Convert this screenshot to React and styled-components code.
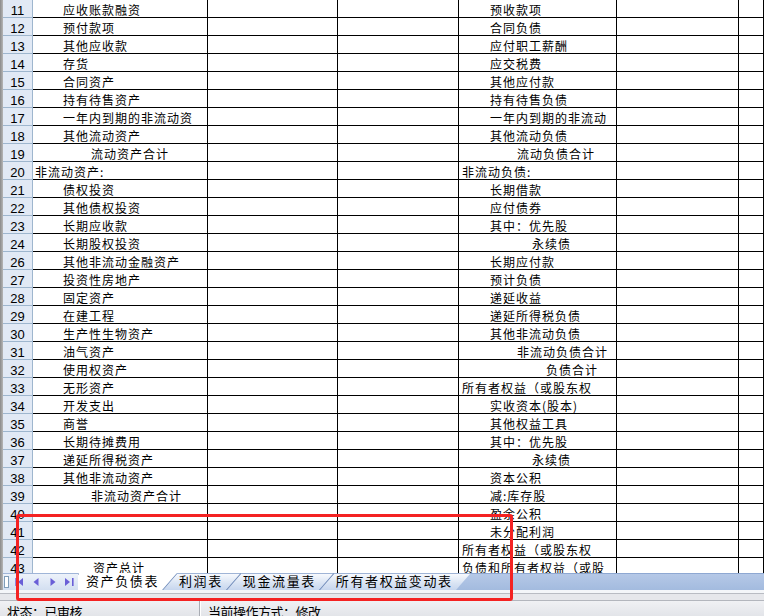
import React from 'react';
import styled, { createGlobalStyle } from 'styled-components';

const Global = createGlobalStyle`
  html, body { margin: 0; padding: 0; background: #fff; }
  body { font-family: "Noto Sans CJK SC", "Noto Sans", sans-serif; }
`;

const Root = styled.div`
  position: relative;
  width: 764px;
  height: 616px;
  overflow: hidden;
  display: flex;
  flex-direction: column;
  background: #fff;
`;

const Body = styled.div`
  display: flex;
  height: 590px;
  flex: none;
`;

const Strip = styled.div`
  width: 3px;
  flex: none;
  background: linear-gradient(to right, #8a8a8a, #b6b6b6);
`;

const Main = styled.div`
  flex: 1;
  min-width: 0;
  display: flex;
  flex-direction: column;
`;

const Grid = styled.div`
  height: 573px;
  overflow: hidden;
  flex: none;
`;

const Row = styled.div`
  display: grid;
  grid-template-columns: 30px 175px 130px 121px 158px 122px 1fr;
  height: 18px;
`;

const RowHead = styled.div`
  box-sizing: border-box;
  background: #e1e9f5;
  border-right: 1px solid #9eb6ce;
  border-bottom: 1px solid #9eb6ce;
  font: 13px "Liberation Sans", Arial, sans-serif;
  color: #000;
  text-align: center;
  line-height: 17px;
  padding-top: 2px;
  overflow: hidden;
`;

const Cell = styled.div`
  box-sizing: border-box;
  border-right: 1px solid #000;
  border-bottom: 1px solid #000;
  padding-left: ${(p) => p.$indent || 0}px;
  padding-top: 1px;
  font-family: "Noto Sans CJK SC", sans-serif;
  font-size: 12px;
  letter-spacing: 1px;
  line-height: 17px;
  color: #000;
  white-space: nowrap;
  overflow: hidden;
`;

const TabBar = styled.div`
  display: flex;
  height: 17px;
  flex: none;
  background: linear-gradient(#8ea8d2 0 1px, #b5c8e7 1px, #a3bbdf);
`;

const Nav = styled.div`
  position: relative;
  z-index: 30;
  width: 75px;
  flex: none;
  display: flex;
  align-items: center;
  padding-left: 1px;
  box-sizing: border-box;
  background: linear-gradient(#9fb5d8 0 1px, #edf2fa 1px, #d3dff1);
`;

const Handle = styled.div`
  width: 3px;
  height: 10px;
  margin-right: 2px;
  background: #fff;
  border: 1px solid #7f9db9;
  box-sizing: content-box;
`;

const NavButton = styled.div`
  width: 17px;
  height: 17px;
  display: flex;
  align-items: center;
  justify-content: center;
`;

const TabList = styled.div`
  display: flex;
  margin-left: -14px;
  height: 17px;
`;

const Tab = styled.div`
  position: relative;
  z-index: ${(p) => (p.$active ? 20 : p.$order)};
  height: 17px;
  padding: 0 3px 0 ${(p) => (p.$first ? 22 : 17)}px;
  font-family: "Noto Sans CJK SC", sans-serif;
  font-size: 13px;
  letter-spacing: 1.6px;
  line-height: 16px;
  color: #000;
  white-space: nowrap;

  &::before {
    content: "";
    position: absolute;
    inset: 0;
    z-index: -1;
    transform-origin: bottom left;
    transform: skewX(-41deg);
    border-left: 1px solid #6f88b5;
    border-top: 1px solid ${(p) => (p.$active ? '#ffffff' : '#9fb4d6')};
    background: ${(p) =>
      p.$active
        ? '#ffffff'
        : 'linear-gradient(#f7f9fd, #d8e3f3 60%, #c7d6ee)'};
  }
`;

const Gap = styled.div`
  height: 10px;
  flex: none;
  background: linear-gradient(#f4f6f9 0 3px, #b9bcc3 3px 4px, #e6e7eb 4px);
`;

const StatusBar = styled.div`
  flex: 1;
  display: flex;
  border-top: 1px solid #b3b6bd;
  background: linear-gradient(#f0f1f4, #dfe1e6);
`;

const StatusPane = styled.div`
  width: ${(p) => p.$width || 'auto'};
  flex: ${(p) => (p.$width ? 'none' : '1')};
  box-sizing: border-box;
  padding: 3px 0 0 ${(p) => p.$pad}px;
  border-right: ${(p) => (p.$divider ? '1px solid #a9acb3' : 'none')};
  box-shadow: ${(p) => (p.$divider ? '1px 0 0 #ffffff' : 'none')};
  font-family: "Noto Sans CJK SC", sans-serif;
  font-size: 13px;
  letter-spacing: -0.5px;
  line-height: 16px;
  color: #000;
  white-space: nowrap;
  overflow: hidden;
`;

const Annotation = styled.div`
  position: absolute;
  left: 16px;
  top: 514px;
  width: 497px;
  height: 87px;
  box-sizing: border-box;
  border: 3px solid #f42222;
  border-radius: 3px;
  pointer-events: none;
  z-index: 50;
`;

const ICON = '#6a5fd7';

function FirstIcon() {
  return (
    <svg width="9" height="8" viewBox="0 0 9 8">
      <rect x="0" y="0" width="1.3" height="8" fill="#8f89e0" />
      <polygon points="8,0 3,4 8,8" fill={ICON} />
    </svg>
  );
}
function PrevIcon() {
  return (
    <svg width="6" height="8" viewBox="0 0 6 8">
      <polygon points="5.5,0 0.5,4 5.5,8" fill={ICON} />
    </svg>
  );
}
function NextIcon() {
  return (
    <svg width="6" height="8" viewBox="0 0 6 8">
      <polygon points="0.5,0 5.5,4 0.5,8" fill={ICON} />
    </svg>
  );
}
function LastIcon() {
  return (
    <svg width="9" height="8" viewBox="0 0 9 8">
      <polygon points="0,0 5,4 0,8" fill={ICON} />
      <rect x="7" y="0" width="1.6" height="8" fill={ICON} />
    </svg>
  );
}

const rows = [
  [11, ['应收账款融资', 30], ['预收款项', 31]],
  [12, ['预付款项', 30], ['合同负债', 31]],
  [13, ['其他应收款', 30], ['应付职工薪酬', 31]],
  [14, ['存货', 30], ['应交税费', 31]],
  [15, ['合同资产', 30], ['其他应付款', 31]],
  [16, ['持有待售资产', 30], ['持有待售负债', 31]],
  [17, ['一年内到期的非流动资', 30], ['一年内到期的非流动', 31]],
  [18, ['其他流动资产', 30], ['其他流动负债', 31]],
  [19, ['流动资产合计', 58], ['流动负债合计', 58]],
  [20, ['非流动资产:', 2], ['非流动负债:', 3]],
  [21, ['债权投资', 30], ['长期借款', 31]],
  [22, ['其他债权投资', 30], ['应付债券', 31]],
  [23, ['长期应收款', 30], ['其中：优先股', 31]],
  [24, ['长期股权投资', 30], ['永续债', 73]],
  [26, ['其他非流动金融资产', 30], ['长期应付款', 31]],
  [27, ['投资性房地产', 30], ['预计负债', 31]],
  [28, ['固定资产', 30], ['递延收益', 31]],
  [29, ['在建工程', 30], ['递延所得税负债', 31]],
  [30, ['生产性生物资产', 30], ['其他非流动负债', 31]],
  [31, ['油气资产', 30], ['非流动负债合计', 58]],
  [32, ['使用权资产', 30], ['负债合计', 87]],
  [33, ['无形资产', 30], ['所有者权益（或股东权', 3]],
  [34, ['开发支出', 30], ['实收资本(股本)', 31]],
  [35, ['商誉', 30], ['其他权益工具', 31]],
  [36, ['长期待摊费用', 30], ['其中：优先股', 31]],
  [37, ['递延所得税资产', 30], ['永续债', 73]],
  [38, ['其他非流动资产', 30], ['资本公积', 31]],
  [39, ['非流动资产合计', 58], ['减:库存股', 31]],
  [40, ['', 0], ['盈余公积', 31]],
  [41, ['', 0], ['未分配利润', 31]],
  [42, ['', 0], ['所有者权益（或股东权', 3]],
  [43, ['资产总计', 60], ['负债和所有者权益（或股', 3]],
];

const tabs = ['资产负债表', '利润表', '现金流量表', '所有者权益变动表'];

export default function App() {
  return (
    <>
      <Global />
      <Root>
        <Body>
          <Strip />
          <Main>
            <Grid>
              {rows.map(([n, left, right]) => (
                <Row key={n}>
                  <RowHead>{n}</RowHead>
                  <Cell $indent={left[1]}>{left[0]}</Cell>
                  <Cell />
                  <Cell />
                  <Cell $indent={right[1]}>{right[0]}</Cell>
                  <Cell />
                  <Cell />
                </Row>
              ))}
            </Grid>
            <TabBar>
              <Nav>
                <Handle />
                <NavButton><FirstIcon /></NavButton>
                <NavButton><PrevIcon /></NavButton>
                <NavButton><NextIcon /></NavButton>
                <NavButton><LastIcon /></NavButton>
              </Nav>
              <TabList>
                {tabs.map((t, i) => (
                  <Tab key={t} $active={i === 0} $first={i === 0} $order={i + 1}>
                    {t}
                  </Tab>
                ))}
              </TabList>
            </TabBar>
          </Main>
        </Body>
        <Gap />
        <StatusBar>
          <StatusPane $width="200px" $pad={7} $divider>状态：已审核</StatusPane>
          <StatusPane $pad={8}>当前操作方式：修改</StatusPane>
        </StatusBar>
        <Annotation />
      </Root>
    </>
  );
}
